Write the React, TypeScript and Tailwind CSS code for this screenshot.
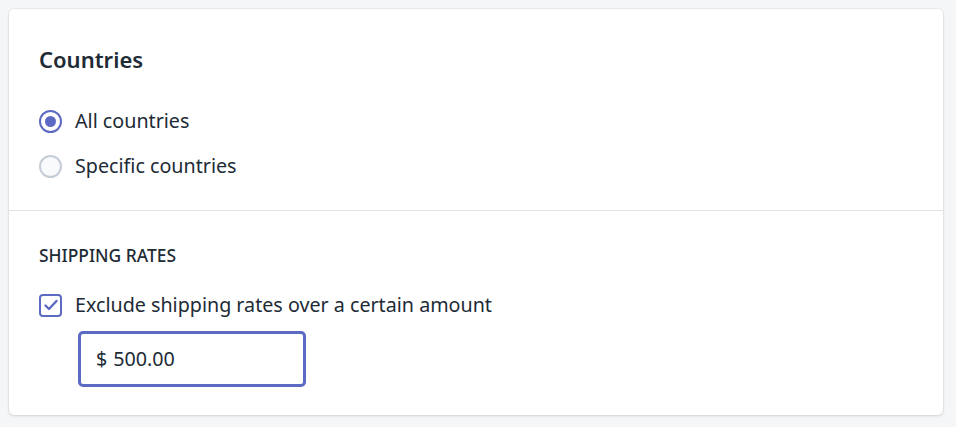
import { useState } from 'react'

const App = () => {
  const [scope, setScope] = useState('all')
  const [exclude, setExclude] = useState(true)
  const [amount, setAmount] = useState('500.00')

  return (
    <main
      className="min-h-screen bg-[#f4f6f8] p-[9px] pr-[13px] text-[#212b36]"
      style={{ fontFamily: '"Noto Sans", "Open Sans", sans-serif' }}
    >
      <div className="rounded-[5px] bg-white shadow-[0_0_0_1px_rgba(63,63,68,0.05),0_1px_3px_0_rgba(63,63,68,0.15)]">
        {/* Countries section */}
        <section className="px-[30px] pt-[36px] pb-[30px] border-b border-[#dfe3e8]">
          <h2 className="text-[22px] font-semibold leading-[28px] mb-[34px]">Countries</h2>
          <div className="flex flex-col gap-[17px]">
            {[
              { id: 'all', label: 'All countries' },
              { id: 'specific', label: 'Specific countries' },
            ].map((opt) => (
              <label key={opt.id} className="flex items-center gap-[13px] cursor-pointer">
                <span
                  className={
                    scope === opt.id
                      ? 'flex h-[23px] w-[23px] items-center justify-center rounded-full border-2 border-[#5c6ac4] bg-white'
                      : 'flex h-[23px] w-[23px] items-center justify-center rounded-full border-2 border-[#c4cdd5] bg-[#f9fafb]'
                  }
                >
                  {scope === opt.id && <span className="h-[11px] w-[11px] rounded-full bg-[#5c6ac4]" />}
                </span>
                <input
                  type="radio"
                  className="hidden"
                  checked={scope === opt.id}
                  onChange={() => setScope(opt.id)}
                />
                <span className="text-[19.7px] leading-[28px]">{opt.label}</span>
              </label>
            ))}
          </div>
        </section>

        {/* Shipping rates section */}
        <section className="px-[30px] pt-[34px] pb-[28px]">
          <h3 className="text-[17.4px] font-medium uppercase leading-[20px] mb-[26px]">Shipping rates</h3>
          <label className="flex items-center gap-[13px] cursor-pointer">
            <span className="flex h-[23px] w-[23px] items-center justify-center rounded-[4px] border-2 border-[#5c6ac4] bg-white">
              {exclude && (
                <svg viewBox="0 0 16 16" className="h-[16px] w-[16px]" fill="none">
                  <path d="M2.5 8.5l3.5 3.5 7.5-8" stroke="#5c6ac4" strokeWidth="2.4" strokeLinecap="round" strokeLinejoin="round" />
                </svg>
              )}
            </span>
            <input
              type="checkbox"
              className="hidden"
              checked={exclude}
              onChange={(e) => setExclude(e.target.checked)}
            />
            <span className="text-[19.7px] leading-[28px]">Exclude shipping rates over a certain amount</span>
          </label>
          <div className="mt-[12px] ml-[39px] flex h-[56px] w-[228px] items-center rounded-[5px] border-[3px] border-[#5c6ac4] px-[15px] text-[19.7px]">
            <span className="mr-[6px]">$</span>
            <input
              value={amount}
              onChange={(e) => setAmount(e.target.value)}
              className="w-full bg-transparent outline-none"
            />
          </div>
        </section>
      </div>
    </main>
  )
}

export default App
